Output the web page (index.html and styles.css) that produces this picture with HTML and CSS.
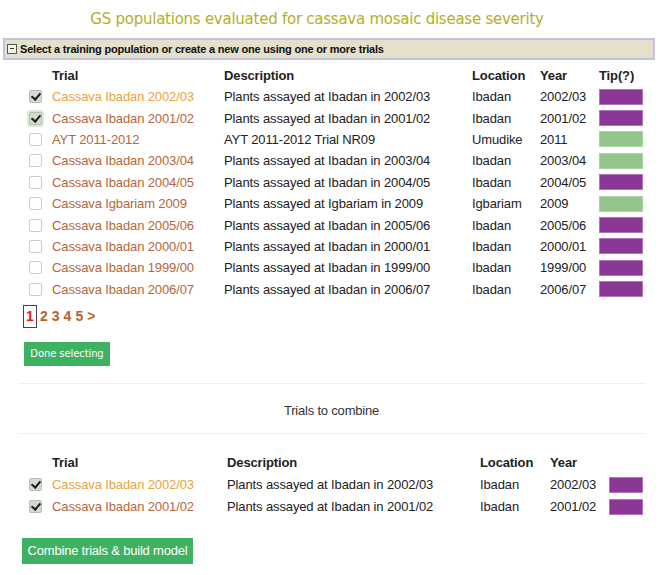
FILE: index.html
```html
<!DOCTYPE html>
<html>
<head>
<meta charset="utf-8">
<link rel="stylesheet" href="styles.css">
</head>
<body>
<h1 class="title">GS populations evaluated for cassava mosaic disease severity</h1>
<div class="bar"><span class="toggle"></span>Select a training population or create a new one using one or more trials</div>

<table class="trials t1">
  <colgroup><col class="c-chk"><col class="c-trial"><col class="c-desc"><col class="c-loc"><col class="c-year"><col class="c-tip"></colgroup>
  <thead><tr><th></th><th>Trial</th><th>Description</th><th>Location</th><th>Year</th><th>Tip(?)</th></tr></thead>
  <tbody>
    <tr><td><input type="checkbox" class="chk" checked></td><td><a class="lnk hot">Cassava Ibadan 2002/03</a></td><td>Plants assayed at Ibadan in 2002/03</td><td>Ibadan</td><td>2002/03</td><td><span class="sw purple"></span></td></tr>
    <tr><td><input type="checkbox" class="chk focus" checked></td><td><a class="lnk">Cassava Ibadan 2001/02</a></td><td>Plants assayed at Ibadan in 2001/02</td><td>Ibadan</td><td>2001/02</td><td><span class="sw purple"></span></td></tr>
    <tr><td><input type="checkbox" class="chk"></td><td><a class="lnk">AYT 2011-2012</a></td><td>AYT 2011-2012 Trial NR09</td><td>Umudike</td><td>2011</td><td><span class="sw green"></span></td></tr>
    <tr><td><input type="checkbox" class="chk"></td><td><a class="lnk">Cassava Ibadan 2003/04</a></td><td>Plants assayed at Ibadan in 2003/04</td><td>Ibadan</td><td>2003/04</td><td><span class="sw green"></span></td></tr>
    <tr><td><input type="checkbox" class="chk"></td><td><a class="lnk">Cassava Ibadan 2004/05</a></td><td>Plants assayed at Ibadan in 2004/05</td><td>Ibadan</td><td>2004/05</td><td><span class="sw purple"></span></td></tr>
    <tr><td><input type="checkbox" class="chk"></td><td><a class="lnk">Cassava Igbariam 2009</a></td><td>Plants assayed at Igbariam in 2009</td><td>Igbariam</td><td>2009</td><td><span class="sw green"></span></td></tr>
    <tr><td><input type="checkbox" class="chk"></td><td><a class="lnk">Cassava Ibadan 2005/06</a></td><td>Plants assayed at Ibadan in 2005/06</td><td>Ibadan</td><td>2005/06</td><td><span class="sw purple"></span></td></tr>
    <tr><td><input type="checkbox" class="chk"></td><td><a class="lnk">Cassava Ibadan 2000/01</a></td><td>Plants assayed at Ibadan in 2000/01</td><td>Ibadan</td><td>2000/01</td><td><span class="sw purple"></span></td></tr>
    <tr><td><input type="checkbox" class="chk"></td><td><a class="lnk">Cassava Ibadan 1999/00</a></td><td>Plants assayed at Ibadan in 1999/00</td><td>Ibadan</td><td>1999/00</td><td><span class="sw purple"></span></td></tr>
    <tr><td><input type="checkbox" class="chk"></td><td><a class="lnk">Cassava Ibadan 2006/07</a></td><td>Plants assayed at Ibadan in 2006/07</td><td>Ibadan</td><td>2006/07</td><td><span class="sw purple"></span></td></tr>
  </tbody>
</table>

<div class="pager"><span class="cur">1</span><a>2</a><a>3</a><a>4</a><a>5</a><a>&gt;</a></div>
<button class="btn done">Done selecting</button>

<div class="combine-head">Trials to combine</div>

<table class="trials t2">
  <colgroup><col class="c-chk"><col class="c-trial"><col class="c-desc"><col class="c-loc"><col class="c-year"><col class="c-tip"></colgroup>
  <thead><tr><th></th><th>Trial</th><th>Description</th><th>Location</th><th>Year</th><th></th></tr></thead>
  <tbody>
    <tr><td><input type="checkbox" class="chk" checked></td><td><a class="lnk hot">Cassava Ibadan 2002/03</a></td><td>Plants assayed at Ibadan in 2002/03</td><td>Ibadan</td><td>2002/03</td><td><span class="sw purple"></span></td></tr>
    <tr><td><input type="checkbox" class="chk" checked></td><td><a class="lnk">Cassava Ibadan 2001/02</a></td><td>Plants assayed at Ibadan in 2001/02</td><td>Ibadan</td><td>2001/02</td><td><span class="sw purple"></span></td></tr>
  </tbody>
</table>

<button class="btn build">Combine trials &amp; build model</button>
</body>
</html>
```

FILE: styles.css
```css
html, body { margin: 0; padding: 0; background: #fff; }
body {
  width: 660px;
  font-family: "Liberation Sans", Arial, sans-serif;
  color: #222;
}
.title {
  margin: 0;
  padding: 10px 26px 0 0;
  height: 29px;
  box-sizing: border-box;
  text-align: center;
  font-family: "DejaVu Sans", sans-serif;
  font-weight: normal;
  font-size: 15px;
  letter-spacing: -0.25px;
  color: #b3ae2c;
}
.bar {
  margin: 9px 5px 0 3px;
  height: 22px;
  box-sizing: border-box;
  border: 2px solid #c4c3db;
  background: #e3e0cc;
  display: flex;
  align-items: center;
  padding-left: 2px;
  font-weight: bold;
  font-size: 11px;
  letter-spacing: -0.2px;
  color: #111;
}
.toggle {
  width: 10px; height: 10px;
  border: 1px solid #555;
  box-sizing: border-box;
  margin-right: 3px;
  position: relative;
  background: #f4f2e8;
}
.toggle::after {
  content: "";
  position: absolute;
  left: 2px; right: 2px; top: 3px;
  height: 1px;
  background: #333;
}
.trials {
  border-collapse: collapse;
  table-layout: fixed;
  margin-left: 24px;
  font-size: 13px;
  letter-spacing: -0.12px;
  color: #222;
}
.t1 { margin-top: 5px; width: 621px; }
.t1 .c-chk { width: 28px; }
.t1 .c-trial { width: 172px; }
.t1 .c-desc { width: 248px; }
.t1 .c-loc { width: 68px; }
.t1 .c-year { width: 59px; }
.t1 .c-tip { width: 46px; }
.t2 { margin-top: 18px; width: 621px; }
.t2 .c-chk { width: 28px; }
.t2 .c-trial { width: 175px; }
.t2 .c-desc { width: 253px; }
.t2 .c-loc { width: 70px; }
.t2 .c-year { width: 59px; }
.t2 .c-tip { width: 36px; }
.trials th, .trials td {
  padding: 0;
  text-align: left;
  white-space: nowrap;
  vertical-align: middle;
}
.trials th { font-weight: bold; height: 21px; }
.t1 td { height: 21.4px; }
.t2 td { height: 22px; }
.t2 tbody tr:first-child td { padding-top: 1px; }
.lnk { color: #b5673a; text-decoration: none; }
.lnk.hot { color: #eba33e; }
.chk {
  appearance: none;
  -webkit-appearance: none;
  width: 13px; height: 13px;
  margin: 0 0 0 5px;
  border: 1px solid #c6d2c4;
  border-radius: 2px;
  background: #fff;
  display: block;
  position: relative;
}
.chk:checked {
  background: #d3dbd0;
  border-color: #b4c0b0;
}
.chk:checked::after {
  content: "";
  position: absolute;
  left: 3px; top: 0px;
  width: 4px; height: 7px;
  border: solid #1e1e1e;
  border-width: 0 2px 2px 0;
  transform: rotate(40deg);
}
.chk.focus { box-shadow: 0 0 0 2px #dbe9d8; }
.sw {
  display: block;
  height: 16px;
  box-sizing: border-box;
  border: 1px solid #b277bb;
  background: #8b3796;
}
.sw.green { background: #92c48c; border-color: #a9d3a3; }
.t1 .sw { width: 44px; }
.t2 .sw { width: 34px; }
.pager {
  display: flex;
  align-items: center;
  margin: 5px 0 0 23px;
  font-weight: bold;
  font-size: 14px;
  gap: 4px;
}
.pager .cur {
  color: #e2201e;
  border: 1px solid #444;
  height: 23px;
  width: 14px;
  box-sizing: border-box;
  display: flex;
  align-items: center;
  justify-content: center;
  margin-right: -1px;
}
.pager a { color: #b5632a; }
.btn {
  display: block;
  border: none;
  background: #3fb163;
  color: #fff;
  cursor: pointer;
  padding: 0;
}
.done {
  margin: 14px 0 0 24px;
  width: 86px; height: 24px;
  font-family: "DejaVu Sans", sans-serif;
  font-size: 10px;
  letter-spacing: -0.1px;
}
.combine-head {
  margin: 17px 15px 0 18px;
  border-top: 1px solid #efefef;
  border-bottom: 1px solid #efefef;
  height: 51px;
  box-sizing: border-box;
  padding-top: 4px;
  display: flex;
  align-items: center;
  justify-content: center;
  font-size: 13px;
  letter-spacing: -0.2px;
  color: #333;
}
.build {
  margin: 20px 0 0 22px;
  width: 171px; height: 26px;
  font-family: "Liberation Sans", Arial, sans-serif;
  font-size: 13px;
  letter-spacing: -0.2px;
}
```
